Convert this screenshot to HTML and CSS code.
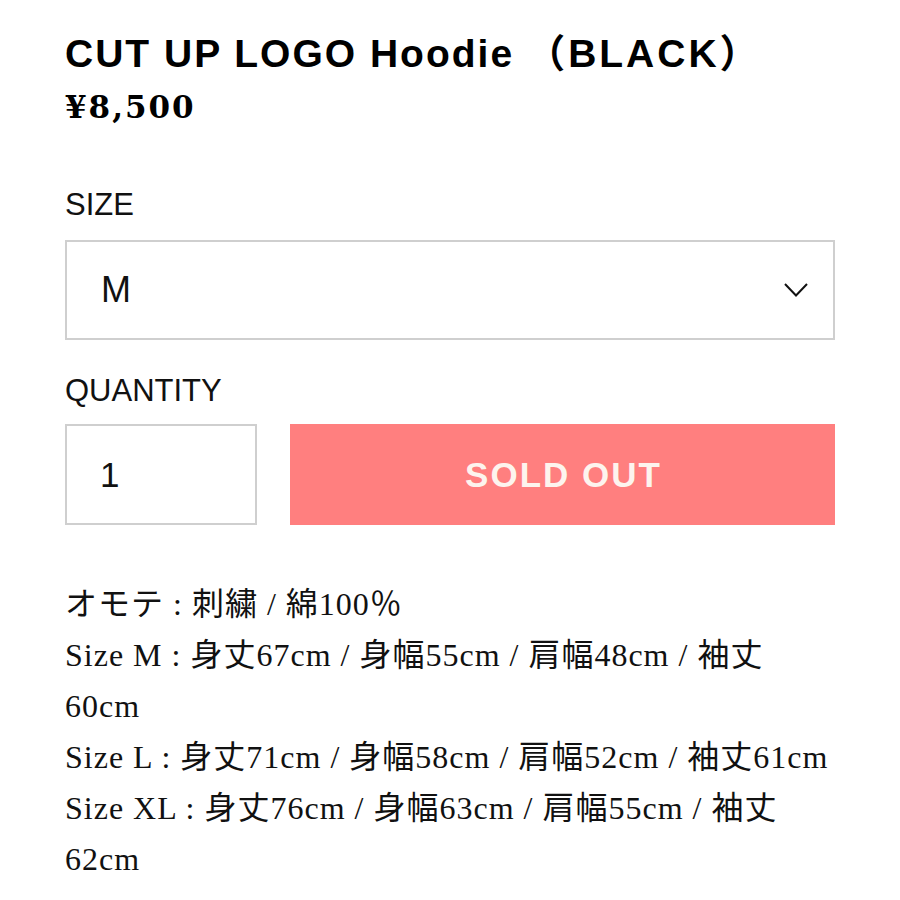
FILE: index.html
```html
<!DOCTYPE html>
<html lang="ja">
<head>
<meta charset="utf-8">
<title>CUT UP LOGO Hoodie（BLACK）</title>
<link rel="stylesheet" href="styles.css">
</head>
<body>
<main class="product">
  <h1 class="title">CUT UP LOGO Hoodie<span class="title-variant">（BLACK）</span></h1>
  <p class="price">¥8,500</p>

  <div class="field-label">SIZE</div>
  <div class="select">
    <span class="select-value">M</span>
    <svg class="chevron" width="24" height="14" viewBox="0 0 24 14" aria-hidden="true">
      <polyline points="1,1 12,12.5 23,1" fill="none" stroke="#111" stroke-width="2"/>
    </svg>
  </div>

  <div class="field-label field-label--qty">QUANTITY</div>
  <div class="buy-row">
    <div class="qty">1</div>
    <button class="soldout" type="button">SOLD OUT</button>
  </div>

  <div class="desc">
    <p>オモテ : 刺繍 / 綿100％</p>
    <p>Size M : 身丈67cm / 身幅55cm / 肩幅48cm / 袖丈60cm</p>
    <p>Size L : 身丈71cm / 身幅58cm / 肩幅52cm / 袖丈61cm</p>
    <p>Size XL : 身丈76cm / 身幅63cm / 肩幅55cm / 袖丈62cm</p>
  </div>
</main>
</body>
</html>
```

FILE: styles.css
```css
html, body {
  margin: 0;
  padding: 0;
  background: #ffffff;
}

body {
  color: #000;
  font-family: "Liberation Sans", Arial, sans-serif;
}

.product {
  width: 770px;
  padding: 29px 65px 0;
}

.title {
  margin: 0;
  font-family: "Liberation Sans", "Noto Sans CJK JP", sans-serif;
  font-weight: 700;
  font-size: 39px;
  line-height: 50px;
  letter-spacing: 2px;
  white-space: nowrap;
}

.title-variant {
  margin-left: 12px;
  letter-spacing: 3px;
}

.price {
  margin: 8px 0 0;
  font-family: "DejaVu Serif", serif;
  font-weight: 700;
  font-size: 31px;
  line-height: 40px;
  letter-spacing: 2px;
}

.field-label {
  margin-top: 60px;
  font-size: 31px;
  line-height: 36px;
  color: #111;
}

.field-label--qty {
  margin-top: 33px;
}

.select {
  box-sizing: border-box;
  margin-top: 17px;
  height: 100px;
  border: 2px solid #cfcfcf;
  display: flex;
  align-items: center;
  justify-content: space-between;
  padding: 0 25px 0 34px;
}

.select-value {
  font-size: 36px;
  line-height: 36px;
  color: #111;
}

.chevron {
  display: block;
}

.buy-row {
  margin-top: 15px;
  display: flex;
  gap: 33px;
  height: 101px;
}

.qty {
  box-sizing: border-box;
  width: 192px;
  height: 101px;
  border: 2px solid #cfcfcf;
  display: flex;
  align-items: center;
  padding-left: 33px;
  font-size: 35px;
  line-height: 36px;
  color: #111;
}

.soldout {
  flex: 1;
  height: 101px;
  border: 0;
  margin: 0;
  padding: 0;
  background: #ff7f7f;
  color: #fdf4ee;
  font-family: "Liberation Sans", Arial, sans-serif;
  font-weight: 700;
  font-size: 35px;
  letter-spacing: 2px;
  text-indent: 2px;
}

.desc {
  margin-top: 54px;
  font-family: "Liberation Serif", "Noto Sans CJK JP", serif;
  font-size: 32px;
  line-height: 51px;
  letter-spacing: 1px;
  color: #111;
}

.desc p {
  margin: 0;
}
```
